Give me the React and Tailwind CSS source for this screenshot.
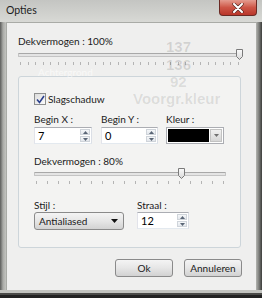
import React from "react";

const font = { fontFamily: 'Lato, "Noto Sans", sans-serif' };

function Ticks({ count }) {
  return (
    <div className="flex justify-between h-[3px] px-[2px]">
      {Array.from({ length: count }).map((_, i) => (
        <div key={i} className="w-px h-[3px] bg-[#b4b4b4]" />
      ))}
    </div>
  );
}

function Thumb() {
  return (
    <svg width="7" height="11" viewBox="0 0 7 11">
      <defs>
        <linearGradient id="tg" x1="0" x2="0" y1="0" y2="1">
          <stop offset="0" stopColor="#fbfbfb" />
          <stop offset="1" stopColor="#d8d8d8" />
        </linearGradient>
      </defs>
      <path d="M0.5 0.5 H6.5 V7.5 L3.5 10.5 L0.5 7.5 Z" fill="url(#tg)" stroke="#7a7a7a" />
    </svg>
  );
}

function Slider({ pos, ticks }) {
  return (
    <div>
      <div className="relative h-[10px] flex items-center">
        <div className="w-full h-[4px] border border-[#c4c4c4] border-t-[#a8a8a8] bg-[#e4e4e4] rounded-[1px]" />
        <div className="absolute top-[-1px]" style={{ left: pos }}>
          <Thumb />
        </div>
      </div>
      <div className="mt-[2px]">
        <Ticks count={ticks} />
      </div>
    </div>
  );
}

function Spin({ value, width }) {
  return (
    <div
      className="flex h-[17px] bg-white border border-[#abadb3] border-r-[#dbdfe6] border-b-[#e3e9ef] border-l-[#e2e3ea]"
      style={{ width }}
    >
      <div className="flex-1 pl-[3px] text-[11px] leading-[15px] text-black">{value}</div>
      <div className="w-[11px] flex flex-col gap-px py-px pr-px">
        <div className="flex-1 bg-gradient-to-b from-[#f5f7f9] to-[#e3e7ec] border border-[#cfd4da] flex items-center justify-center">
          <svg width="5" height="3" viewBox="0 0 5 3"><path d="M0 3 L2.5 0 L5 3 Z" fill="#5a6676" /></svg>
        </div>
        <div className="flex-1 bg-gradient-to-b from-[#f5f7f9] to-[#e3e7ec] border border-[#cfd4da] flex items-center justify-center">
          <svg width="5" height="3" viewBox="0 0 5 3"><path d="M0 0 L2.5 3 L5 0 Z" fill="#5a6676" /></svg>
        </div>
      </div>
    </div>
  );
}

function WinButton({ children, className = "" }) {
  return (
    <div
      className={
        "h-[18px] border border-[#8a8a8a] rounded-[3px] bg-gradient-to-b from-[#f4f4f4] via-[#e6e6e6] to-[#d2d2d2] text-[10px] leading-[16px] text-[#1a1a1a] " +
        className
      }
    >
      {children}
    </div>
  );
}

export default function App() {
  return (
    <div className="w-[262px] h-[298px] relative flex flex-col bg-[#c8c9c5] overflow-hidden" style={font}>
      {/* title bar */}
      <div className="h-[22px] flex justify-between bg-gradient-to-b from-[#c4c5c2] to-[#d8d9d5]">
        <div className="pl-[6px] pt-[4px] text-[10.5px] leading-[13px] text-[#1c1c1c]">Opties</div>
        <div className="w-[38px] h-[16px] mr-[5px] rounded-b-[4px] border border-t-0 border-[#6b2a24] bg-gradient-to-b from-[#e49b8f] via-[#cd5546] to-[#b9362a] flex items-center justify-center">
          <svg width="12" height="10" viewBox="0 0 12 10">
            <path d="M2 1 L10 9 M10 1 L2 9" stroke="#5a2a24" strokeWidth="3.4" strokeLinecap="round" />
            <path d="M2 1 L10 9 M10 1 L2 9" stroke="#ffffff" strokeWidth="2" strokeLinecap="round" />
          </svg>
        </div>
      </div>

      {/* middle */}
      <div className="flex h-[268px]">
        <div className="w-[6px] bg-gradient-to-r from-[#5c5d5b] via-[#a9aaa6] to-[#c3c4c0]" />
        <div className="w-[250px] flex flex-col bg-[#efefee] border-l border-t border-[#a9aba6] pl-[11px] pr-[15px] pt-[10px] text-[10px] text-[#1a1a1a]">
          {/* top opacity */}
          <div className="h-[16px] leading-[16px]">Dekvermogen : 100%</div>
          <div className="mt-[1px]">
            <Slider pos="218px" ticks={30} />
          </div>

          {/* group box */}
          <div className="mt-[11px] h-[172px] border border-[#cdd5da] rounded-[3px] bg-[#f3f3f2] pl-[15px] pr-[15px] pt-[15px]">
            <div className="flex items-center h-[14px]">
              <div className="w-[12px] h-[12px] border border-[#8e8f8f] bg-gradient-to-br from-[#dcdcdc] to-[#fbfbfb] flex items-center justify-center">
                <svg width="9" height="9" viewBox="0 0 9 9">
                  <path d="M1 4.5 L3.5 7.5 L8 1" stroke="#2a3f8c" strokeWidth="1.6" fill="none" />
                </svg>
              </div>
              <div className="ml-[2px] leading-[14px]">Slagschaduw</div>
            </div>

            <div className="flex mt-[6px]">
              <div className="w-[67px]">
                <div className="h-[15px] leading-[15px]">Begin X :</div>
                <Spin value="7" width={58} />
              </div>
              <div className="w-[65px]">
                <div className="h-[15px] leading-[15px]">Begin Y :</div>
                <Spin value="0" width={57} />
              </div>
              <div>
                <div className="h-[15px] leading-[15px]">Kleur :</div>
                <div className="w-[58px] h-[17px] flex border border-[#abadb3] bg-white p-px">
                  <div className="flex-1 bg-black" />
                  <div className="w-[12px] ml-px bg-gradient-to-b from-[#f0f0f0] to-[#d6d6d6] border border-[#c2c2c2] flex items-center justify-center">
                    <svg width="5" height="3" viewBox="0 0 5 3"><path d="M0 0 L2.5 3 L5 0 Z" fill="#707070" /></svg>
                  </div>
                </div>
              </div>
            </div>

            <div className="mt-[10px] h-[15px] leading-[15px]">Dekvermogen : 80%</div>
            <div className="w-[192px]">
              <Slider pos="144px" ticks={18} />
            </div>

            <div className="flex mt-[14px]">
              <div className="w-[103px]">
                <div className="h-[14px] leading-[14px]">Stijl :</div>
                <WinButton className="w-[90px] flex items-center justify-between pl-[4px] pr-[5px]">
                  <span>Antialiased</span>
                  <svg width="7" height="4" viewBox="0 0 7 4"><path d="M0 0 L3.5 4 L7 0 Z" fill="#111" /></svg>
                </WinButton>
              </div>
              <div>
                <div className="h-[14px] leading-[14px]">Straal :</div>
                <Spin value="12" width={52} />
              </div>
            </div>
          </div>

          {/* buttons */}
          <div className="flex justify-end gap-[11px] mt-[11px] mr-[-1px]">
            <WinButton className="w-[58px] text-center">Ok</WinButton>
            <WinButton className="w-[58px] text-center">Annuleren</WinButton>
          </div>
        </div>
        <div className="w-[6px] bg-gradient-to-r from-[#b4b5b1] via-[#7d7e7b] to-[#3c3d3b]" />
      </div>

      {/* bottom frame */}
      <div className="h-[8px] flex flex-col">
        <div className="h-[3px] bg-[#c2c3bf]" />
        <div className="h-[2px] bg-[#4a4a48]" />
        <div className="flex-1 bg-[#222]" />
      </div>

      {/* ghost content seen through the translucent glass */}
      <div className="absolute left-[166px] top-[39px] text-[15px] font-bold leading-[15px] text-black/[0.12] pointer-events-none" style={{ fontFamily: '"Liberation Sans", sans-serif' }}>137</div>
      <div className="absolute left-[166px] top-[57px] text-[15px] font-bold leading-[15px] text-black/[0.12] pointer-events-none" style={{ fontFamily: '"Liberation Sans", sans-serif' }}>136</div>
      <div className="absolute left-[170px] top-[74px] text-[15px] font-bold leading-[15px] text-black/[0.1] pointer-events-none" style={{ fontFamily: '"Liberation Sans", sans-serif' }}>92</div>
      <div className="absolute left-[133px] top-[91px] text-[15px] font-bold leading-[15px] text-black/[0.1] pointer-events-none" style={{ fontFamily: '"Liberation Sans", sans-serif' }}>Voorgr.kleur</div>
      <div className="absolute left-[38px] top-[67px] text-[10px] leading-[10px] text-white/60 pointer-events-none">Achtergrond</div>
    </div>
  );
}
